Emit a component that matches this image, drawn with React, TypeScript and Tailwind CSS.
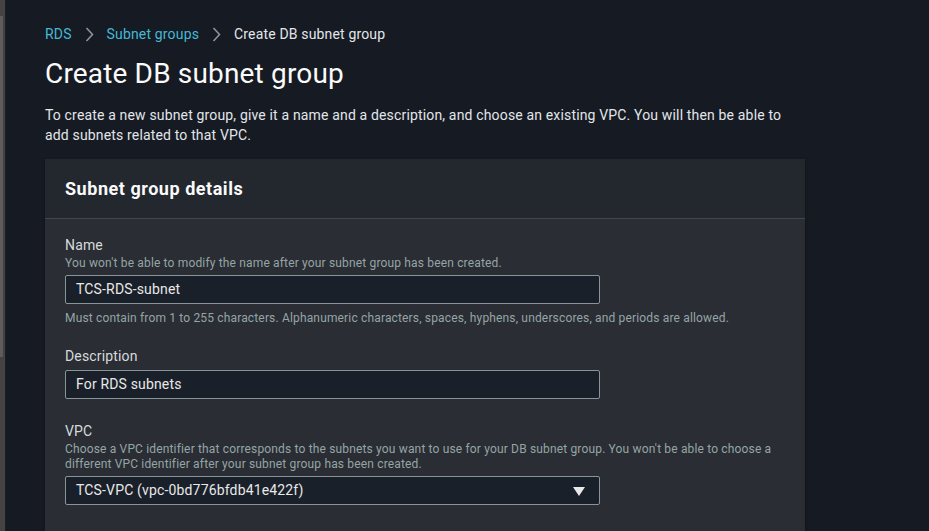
const font = { fontFamily: 'Roboto, "Open Sans", Arial, sans-serif' };

function Chevron() {
  return (
    <svg className="mx-[13px]" width="9" height="15" viewBox="0 0 9 15">
      <path d="M1.5 1 L7.5 7.5 L1.5 14" fill="none" stroke="#879596" strokeWidth="1.6" />
    </svg>
  );
}

function Field({
  label,
  hint,
  value,
  constraint,
  select,
}: {
  label: string;
  hint?: string;
  value: string;
  constraint?: string;
  select?: boolean;
}) {
  return (
    <div className="flex flex-col">
      <div className="text-[14px] leading-[20px] text-[#d5dbdb]">{label}</div>
      {hint && (
        <div className="text-[12px] leading-[15px] text-[#95a5a6] mt-[1px] mb-[4px]">{hint}</div>
      )}
      <div className={"relative w-[535px] h-[29px] rounded-[2px] border border-[#879596] bg-[#1a2029] flex items-center px-[10px] text-[14px] text-[#e8e8e8] " + (hint ? "" : "mt-[4px]")}>
        {value}
        {select && (
          <svg className="absolute right-[14px] top-[10px]" width="12" height="9" viewBox="0 0 12 9">
            <path d="M0 0 H12 L6 9 Z" fill="#e8e8e8" />
          </svg>
        )}
      </div>
      {constraint && (
        <div className="text-[12px] leading-[16px] text-[#95a5a6] mt-[6px] mb-[-2px]">{constraint}</div>
      )}
    </div>
  );
}

export default function App() {
  return (
    <div className="flex w-[929px] h-[531px] overflow-hidden bg-[#161a22] tracking-[0.01em]" style={font}>
      <div className="w-[5px] h-full bg-[#434343] flex flex-col">
        <div className="h-[16px]" />
        <div className="w-[3px] h-[341px] bg-[#5d5d5d]" />
      </div>
      <div className="w-[1px] h-full bg-[#1e1e1e]" />
      <div className="flex-1 pl-[39px] pt-[23px]">
        <div className="w-[760px]">
          <nav className="flex items-center text-[14px] leading-[22px]">
            <span className="text-[#44b9d6]">RDS</span>
            <Chevron />
            <span className="text-[#44b9d6]">Subnet groups</span>
            <Chevron />
            <span className="text-[#e2e6ea]">Create DB subnet group</span>
          </nav>
          <h1 className="mt-[9px] text-[28px] leading-[40px] text-[#fafafa]">Create DB subnet group</h1>
          <p className="mt-[11px] text-[14px] leading-[20px] text-[#e2e6ea]">
            To create a new subnet group, give it a name and a description, and choose an existing VPC. You will then be able to add subnets related to that VPC.
          </p>
          <div className="mt-[14px] bg-[#2a2d33] shadow-[0_1px_2px_rgba(0,0,0,0.5)]">
            <div className="h-[60px] bg-[#23272e] border-b border-[#414750] flex items-center px-[20px]">
              <h2 className="text-[18px] font-bold text-[#fafafa] tracking-[0.03em]">Subnet group details</h2>
            </div>
            <div className="px-[20px] pt-[16px] pb-[40px] flex flex-col gap-[22px]">
              <Field
                label="Name"
                hint="You won't be able to modify the name after your subnet group has been created."
                value="TCS-RDS-subnet"
                constraint="Must contain from 1 to 255 characters. Alphanumeric characters, spaces, hyphens, underscores, and periods are allowed."
              />
              <Field label="Description" value="For RDS subnets" />
              <Field
                label="VPC"
                hint="Choose a VPC identifier that corresponds to the subnets you want to use for your DB subnet group. You won't be able to choose a different VPC identifier after your subnet group has been created."
                value="TCS-VPC (vpc-0bd776bfdb41e422f)"
                select
              />
            </div>
          </div>
        </div>
      </div>
    </div>
  );
}
